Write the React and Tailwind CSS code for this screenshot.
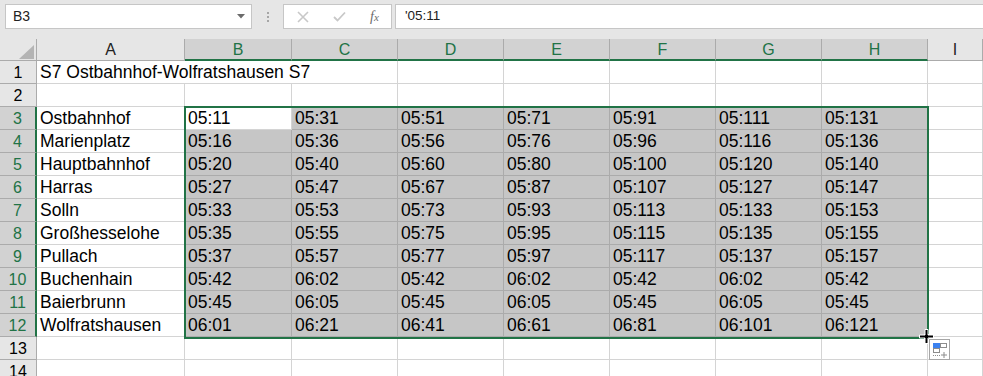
import { useState } from 'react';

const cols = ['A', 'B', 'C', 'D', 'E', 'F', 'G', 'H', 'I'];

const stations = [
  ['Ostbahnhof', '05:11', '05:31', '05:51', '05:71', '05:91', '05:111', '05:131'],
  ['Marienplatz', '05:16', '05:36', '05:56', '05:76', '05:96', '05:116', '05:136'],
  ['Hauptbahnhof', '05:20', '05:40', '05:60', '05:80', '05:100', '05:120', '05:140'],
  ['Harras', '05:27', '05:47', '05:67', '05:87', '05:107', '05:127', '05:147'],
  ['Solln', '05:33', '05:53', '05:73', '05:93', '05:113', '05:133', '05:153'],
  ['Großhesselohe', '05:35', '05:55', '05:75', '05:95', '05:115', '05:135', '05:155'],
  ['Pullach', '05:37', '05:57', '05:77', '05:97', '05:117', '05:137', '05:157'],
  ['Buchenhain', '05:42', '06:02', '05:42', '06:02', '05:42', '06:02', '05:42'],
  ['Baierbrunn', '05:45', '06:05', '05:45', '06:05', '05:45', '06:05', '05:45'],
  ['Wolfratshausen', '06:01', '06:21', '06:41', '06:61', '06:81', '06:101', '06:121'],
];

function RowHead({ n, selected }) {
  return (
    <div
      className={
        'h-[23px] border-b flex items-center justify-center text-[16px] leading-none pt-[1px] ' +
        (selected
          ? 'bg-[#d2d2d2] text-[#217346] border-b-[#ababab] border-r-2 border-r-[#217346]'
          : 'bg-[#e6e6e6] text-black border-b-[#ababab] border-r border-r-[#ababab]')
      }
    >
      {n}
    </div>
  );
}

function Cell({ children, fill, span }) {
  return (
    <div
      className={
        'h-[23px] border-r border-b px-[3px] text-[17.5px] leading-[22px] whitespace-nowrap overflow-visible ' +
        (span ? 'col-span-3 ' : '') +
        (fill ? 'bg-[#c6c6c6] border-[#ababab]' : 'bg-white border-[#d4d4d4]')
      }
    >
      {children}
    </div>
  );
}

function FormulaBar() {
  return (
    <div className="h-[39px] bg-[#e6e6e6] flex items-start pt-[4px]">
      <div className="ml-[5px] w-[247px] h-[25px] bg-white border border-[#c6c6c6] flex items-center pl-[7px] pr-[6px] text-[14px] text-[#222]">
        <span className="flex-1">B3</span>
        <svg width="8" height="5" viewBox="0 0 8 5">
          <path d="M0 0h8L4 4.5z" fill="#6b6b6b" />
        </svg>
      </div>
      <div className="w-[31px] h-[25px] flex flex-col items-center justify-center gap-[2px]">
        <span className="w-[2px] h-[2px] bg-[#a6a6a6]" />
        <span className="w-[2px] h-[2px] bg-[#a6a6a6]" />
        <span className="w-[2px] h-[2px] bg-[#a6a6a6]" />
      </div>
      <div className="w-[109px] h-[25px] bg-white border border-[#c6c6c6] flex items-center">
        <svg className="ml-[13px]" width="12" height="12" viewBox="0 0 12 12">
          <path d="M1 1L11 11M11 1L1 11" stroke="#c8c8c8" strokeWidth="1.6" />
        </svg>
        <svg className="ml-[24px]" width="13" height="11" viewBox="0 0 13 11">
          <path d="M1 6L4.5 9.5L12 1.5" stroke="#c8c8c8" strokeWidth="1.8" fill="none" />
        </svg>
        <span className="ml-[24px] text-[14px] italic text-[#6b6b6b] font-['Liberation_Serif',serif] leading-none">
          f<span className="text-[11px]">x</span>
        </span>
      </div>
      <div className="ml-[3px] flex-1 h-[25px] bg-white border border-r-0 border-[#c6c6c6] flex items-center pl-[9px] text-[13.5px] text-[#222]">
        '05:11
      </div>
    </div>
  );
}

function HeaderRow() {
  return (
    <>
      <div className="h-[22px] bg-[#e6e6e6] border-r border-b border-[#ababab] relative">
        <svg className="absolute left-[19px] top-[6px]" width="15" height="14" viewBox="0 0 15 14">
          <path d="M15 0V14H0z" fill="#b4b4b4" />
        </svg>
      </div>
      {cols.map((c) => {
        const sel = c !== 'A' && c !== 'I';
        return (
          <div
            key={c}
            className={
              'h-[22px] flex items-center justify-center text-[16px] leading-none ' +
              (sel
                ? 'bg-[#d2d2d2] text-[#217346] border-r border-r-[#ababab] border-b-2 border-b-[#217346]'
                : 'bg-[#e6e6e6] text-[#222] border-r border-r-[#ababab] border-b border-b-[#ababab]')
            }
          >
            <span className="pt-[1px]">{c}</span>
          </div>
        );
      })}
    </>
  );
}

function QuickAnalysis() {
  return (
    <svg width="21" height="21" viewBox="0 0 21 21">
      <rect x="0.5" y="0.5" width="20" height="20" fill="white" stroke="#a6a6a6" />
      <rect x="4" y="4" width="7" height="5" fill="#3c82f0" />
      <rect x="11.5" y="4.5" width="6" height="4" fill="none" stroke="#8c8c8c" />
      <rect x="4.5" y="9.5" width="6" height="4" fill="none" stroke="#8c8c8c" />
      <path d="M4 16.5h7" stroke="#8c8c8c" strokeDasharray="1 1" />
      <path d="M15 13v6M12 16h6" stroke="#8c8c8c" />
    </svg>
  );
}

export default function App() {
  const [active] = useState('B3');
  return (
    <div className="w-[983px] h-[376px] overflow-hidden bg-white relative font-['Liberation_Sans',Arial,sans-serif] text-black">
      <FormulaBar />
      <div className="grid grid-cols-[37px_148px_107px_106px_106px_106px_106px_106px_106px_1fr]">
        <HeaderRow />

        <RowHead n={1} />
        <Cell span>S7 Ostbahnhof-Wolfratshausen S7</Cell>
        {[0, 1, 2, 3, 4, 5].map((i) => (
          <Cell key={i} />
        ))}

        <RowHead n={2} />
        {cols.map((c) => (
          <Cell key={c} />
        ))}

        {stations.map((row, r) => (
          <>
            <RowHead key={'h' + r} n={r + 3} selected />
            {row.map((v, i) => (
              <Cell key={r + '-' + i} fill={i > 0 && !(r === 0 && i === 1 && active === 'B3')}>
                {v}
              </Cell>
            ))}
            <Cell key={'i' + r} />
          </>
        ))}

        {[13, 14].map((n) => (
          <>
            <RowHead key={'h' + n} n={n} />
            {cols.map((c) => (
              <Cell key={n + c} />
            ))}
          </>
        ))}
      </div>

      {/* selection outline */}
      <div className="absolute left-[184px] top-[106px] w-[745px] h-[233px] border-2 border-[#217346] pointer-events-none" />
      <div className="absolute left-[924px] top-[334px] w-[6px] h-[6px] bg-[#217346] border border-white" />
      {/* cursor */}
      <svg className="absolute left-[919px] top-[329px]" width="15" height="15" viewBox="0 0 15 15">
        <path d="M6 0.5h3v5.5h5.5v3H9v5.5H6V9H0.5V6H6z" fill="black" stroke="white" strokeWidth="1" />
      </svg>
      <div className="absolute left-[929px] top-[339px]">
        <QuickAnalysis />
      </div>
    </div>
  );
}
